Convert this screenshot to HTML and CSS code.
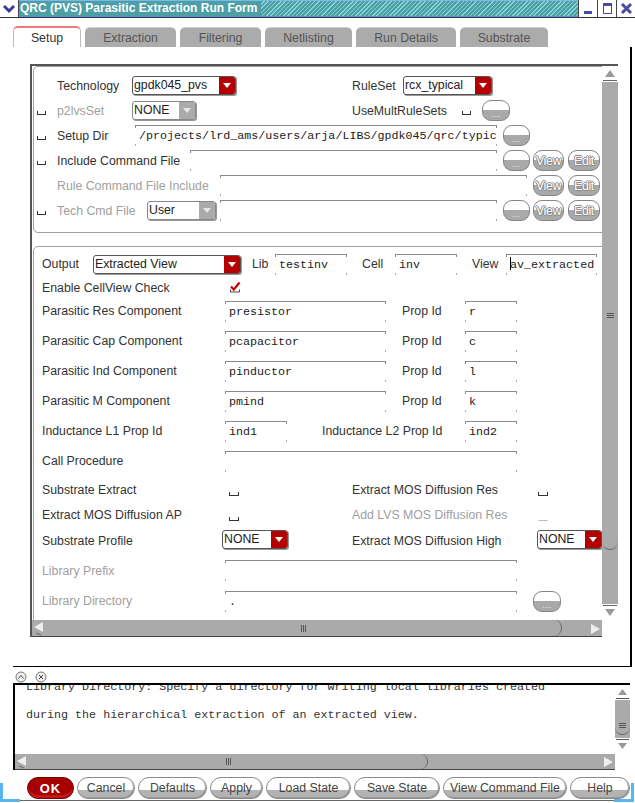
FILE: index.html
```html
<!DOCTYPE html>
<html>
<head>
<meta charset="utf-8">
<title>QRC (PVS) Parasitic Extraction Run Form</title>
<link rel="stylesheet" href="styles.css">
</head>
<body>
<div class="titlebar">
  <div class="tb-menu"><svg width="18" height="17" viewBox="0 0 18 17"><path d="M4 6 L9 11 L14 6" fill="none" stroke="#3b3b9a" stroke-width="3"/></svg></div>
  <div class="tb-title"><span class="tb-text">QRC (PVS) Parasitic Extraction Run Form</span></div>
  <div class="tb-btn"><svg width="18" height="17" viewBox="0 0 18 17"><rect x="5" y="11" width="8" height="3" fill="#4a4aa0"/></svg></div>
  <div class="tb-btn"><svg width="18" height="17" viewBox="0 0 18 17"><rect x="5.5" y="3.5" width="8" height="10" fill="none" stroke="#4a4aa0"/><rect x="5" y="3" width="9" height="3" fill="#4a4aa0"/></svg></div>
  <div class="tb-btn last"><svg width="19" height="17" viewBox="0 0 19 17"><path d="M5 4 L14 13 M14 4 L5 13" stroke="#4a4aa0" stroke-width="3"/></svg></div>
</div>

<div class="tabs">
  <div class="tab active w68">Setup</div>
  <div class="tab w91">Extraction</div>
  <div class="tab w81">Filtering</div>
  <div class="tab w87">Netlisting</div>
  <div class="tab w100">Run Details</div>
  <div class="tab w88">Substrate</div>
</div>

<div class="page">
  <div class="sframe">
    <div class="smain">
      <div class="content">
        <div class="sec sec1">
          <div class="row r25">
            <span class="cbcol"></span>
            <span class="lbl w75">Technology</span>
            <div class="dd w104"><span class="ddt">gpdk045_pvs</span><span class="dda"></span></div>
            <span class="lbl ml116 w51">RuleSet</span>
            <div class="dd w89"><span class="ddt">rcx_typical</span><span class="dda"></span></div>
          </div>
          <div class="row r25">
            <span class="cbcol"><i class="cb"></i></span>
            <span class="lbl dis w75">p2lvsSet</span>
            <div class="dd dis w64"><span class="ddt">NONE</span><span class="dda"></span></div>
            <span class="lbl ml156 w110">UseMultRuleSets</span>
            <i class="cb"></i>
            <div class="pbtn dots ml11 w28">...</div>
          </div>
          <div class="row r25">
            <span class="cbcol"><i class="cb"></i></span>
            <span class="lbl w78">Setup Dir</span>
            <div class="inp w362">/projects/lrd_ams/users/arja/LIBS/gpdk045/qrc/typic</div>
            <div class="pbtn dots ml6 w27">...</div>
          </div>
          <div class="row r25">
            <span class="cbcol"><i class="cb"></i></span>
            <span class="lbl w133">Include Command File</span>
            <div class="inp w307"></div>
            <div class="pbtn dots ml6 w27">...</div>
            <div class="pbtn ghost ml3 w31">View</div>
            <div class="pbtn ghost ml4 w32">Edit</div>
          </div>
          <div class="row r25">
            <span class="cbcol"></span>
            <span class="lbl dis w163">Rule Command File Include</span>
            <div class="inp w307"></div>
            <div class="pbtn ghost ml6 w31">View</div>
            <div class="pbtn ghost ml4 w32">Edit</div>
          </div>
          <div class="row r25">
            <span class="cbcol"><i class="cb"></i></span>
            <span class="lbl dis w90">Tech Cmd File</span>
            <div class="dd dis w69"><span class="ddt">User</span><span class="dda"></span></div>
            <div class="inp ml4 w277"></div>
            <div class="pbtn dots ml6 w27">...</div>
            <div class="pbtn ghost ml3 w31">View</div>
            <div class="pbtn ghost ml4 w32">Edit</div>
          </div>
        </div>

        <div class="sec sec2">
          <div class="row h24">
            <span class="lbl w51">Output</span>
            <div class="dd w148"><span class="ddt">Extracted View</span><span class="dda"></span></div>
            <span class="lbl ml11 w23">Lib</span>
            <div class="inp w72">testinv</div>
            <span class="lbl ml15 w33">Cell</span>
            <div class="inp w62">inv</div>
            <span class="lbl ml15 w34">View</span>
            <div class="inp w91"><span class="caret"></span>av_extracted</div>
          </div>
          <div class="row h20">
            <span class="lbl w185 nudge">Enable CellView Check</span>
            <svg class="check" width="12" height="12" viewBox="0 0 12 12"><path d="M1.5 8.5 V11 H10.5 V8.5" fill="none" stroke="#444"/><path d="M2 5.5 L4.8 8.6 L10.5 1.5" fill="none" stroke="#cc0000" stroke-width="2.2"/></svg>
          </div>
          <div class="row h30">
            <span class="lbl w183">Parasitic Res Component</span>
            <div class="inp w161">presistor</div>
            <span class="lbl ml16 w63">Prop Id</span>
            <div class="inp w52">r</div>
          </div>
          <div class="row h30">
            <span class="lbl w183">Parasitic Cap Component</span>
            <div class="inp w161">pcapacitor</div>
            <span class="lbl ml16 w63">Prop Id</span>
            <div class="inp w52">c</div>
          </div>
          <div class="row h30">
            <span class="lbl w183">Parasitic Ind Component</span>
            <div class="inp w161">pinductor</div>
            <span class="lbl ml16 w63">Prop Id</span>
            <div class="inp w52">l</div>
          </div>
          <div class="row h30">
            <span class="lbl w183">Parasitic M Component</span>
            <div class="inp w161">pmind</div>
            <span class="lbl ml16 w63">Prop Id</span>
            <div class="inp w52">k</div>
          </div>
          <div class="row h30">
            <span class="lbl w183">Inductance L1 Prop Id</span>
            <div class="inp w62">ind1</div>
            <span class="lbl ml35 w143">Inductance L2 Prop Id</span>
            <div class="inp w52">ind2</div>
          </div>
          <div class="row h30">
            <span class="lbl w183">Call Procedure</span>
            <div class="inp w292"></div>
          </div>
          <div class="row h27">
            <span class="lbl w185">Substrate Extract</span>
            <i class="cb low"></i>
            <span class="lbl ml113 w184">Extract MOS Diffusion Res</span>
            <i class="cb low"></i>
          </div>
          <div class="row h24">
            <span class="lbl w185">Extract MOS Diffusion AP</span>
            <i class="cb low"></i>
            <span class="lbl dis ml113 w184">Add LVS MOS Diffusion Res</span>
            <i class="cb low off"></i>
          </div>
          <div class="row h28">
            <span class="lbl w180">Substrate Profile</span>
            <div class="dd w66 up"><span class="ddt">NONE</span><span class="dda"></span></div>
            <span class="lbl ml64 w185">Extract MOS Diffusion High</span>
            <div class="dd w65 up"><span class="ddt">NONE</span><span class="dda"></span></div>
          </div>
          <div class="row h31">
            <span class="lbl dis w183">Library Prefix</span>
            <div class="inp w292"></div>
          </div>
          <div class="row h30">
            <span class="lbl dis w183">Library Directory</span>
            <div class="inp w292">.</div>
            <div class="pbtn dots ml16 w28">...</div>
          </div>
        </div>
      </div>
      <div class="vscroll">
        <svg width="16" height="16" viewBox="0 0 16 16"><rect width="16" height="16" fill="#fff"/><path d="M3 11 L8 4 L13 11 Z" fill="#9a9a9a"/><path d="M1 14.5 H15" stroke="#666"/></svg>
        <div class="vthumb big"><svg width="7" height="6" viewBox="0 0 7 6"><path d="M0 0.5H7M0 2.5H7M0 4.5H7" stroke="#555"/></svg></div>
        <div class="vtrack"></div>
        <svg width="16" height="16" viewBox="0 0 16 16"><rect width="16" height="16" fill="#fff"/><path d="M3 5 L8 12 L13 5 Z" fill="#9a9a9a"/><path d="M1 1.5 H15" stroke="#666"/></svg>
      </div>
    </div>
    <div class="hrow">
      <div class="hscroll w570">
        <svg width="15" height="16" viewBox="0 0 15 16"><rect width="15" height="16" fill="#aaa"/><path d="M2 7 L11 2 L11 12 Z" fill="#eee"/><path d="M4 13 L9 15" stroke="#666"/></svg>
        <div class="hthumb main"><svg width="6" height="7" viewBox="0 0 6 7"><path d="M0.5 0V7M2.5 0V7M4.5 0V7" stroke="#555"/></svg></div>
        <div class="htrack"></div>
        <svg width="15" height="16" viewBox="0 0 15 16"><rect width="15" height="16" fill="#aaa"/><path d="M13 9 L4 4 L4 14 Z" fill="#eee"/></svg>
      </div>
      <div class="corner"></div>
    </div>
  </div>
</div>

<div class="helpicons">
  <svg width="12" height="12" viewBox="0 0 12 12"><circle cx="6" cy="6" r="5" fill="#eee" stroke="#777"/><path d="M3.5 7.5 L6 4.5 L8.5 7.5" fill="none" stroke="#444"/></svg>
  <svg width="12" height="12" viewBox="0 0 12 12"><circle cx="6" cy="6" r="5" fill="#eee" stroke="#777"/><path d="M4 4 L8 8 M8 4 L4 8" stroke="#444"/></svg>
</div>

<div class="helpbox">
  <div class="hmain">
    <div class="htext">
      <div class="hline first">Library Directory: Specify a directory for writing local libraries created</div>
      <div class="hline">during the hierarchical extraction of an extracted view.</div>
    </div>
    <div class="vscroll small">
      <svg width="15" height="15" viewBox="0 0 15 15"><rect width="15" height="15" fill="#fff"/><path d="M3 10 L7.5 4 L12 10 Z" fill="#9a9a9a"/><path d="M1 13.5 H14" stroke="#555"/></svg>
      <div class="vthumb sm"><svg width="7" height="6" viewBox="0 0 7 6"><path d="M0 0.5H7M0 2.5H7M0 4.5H7" stroke="#555"/></svg></div>
      <div class="vtrack"></div>
      <svg width="15" height="16" viewBox="0 0 15 16"><rect width="15" height="16" fill="#fff"/><path d="M3 5 L7.5 11 L12 5 Z" fill="#9a9a9a"/><path d="M1 1.5 H14" stroke="#555"/></svg>
    </div>
  </div>
  <div class="hrow sm">
    <div class="hscroll w600">
      <svg width="15" height="15" viewBox="0 0 15 15"><rect width="15" height="15" fill="#aaa"/><path d="M2 7 L11 2 L11 12 Z" fill="#eee"/><path d="M4 12 L9 14" stroke="#666"/></svg>
      <div class="hthumb help"><svg width="6" height="7" viewBox="0 0 6 7"><path d="M0.5 0V7M2.5 0V7M4.5 0V7" stroke="#555"/></svg></div>
      <div class="htrack"></div>
      <svg width="15" height="15" viewBox="0 0 15 15"><rect width="15" height="15" fill="#aaa"/><path d="M13 8 L4 3 L4 13 Z" fill="#eee"/></svg>
    </div>
    <div class="corner"></div>
  </div>
</div>

<div class="buttons">
  <div class="btn ok w47">OK</div>
  <div class="btn w58">Cancel</div>
  <div class="btn w69">Defaults</div>
  <div class="btn w53">Apply</div>
  <div class="btn w85">Load State</div>
  <div class="btn w86">Save State</div>
  <div class="btn w124">View Command File</div>
  <div class="btn w60">Help</div>
</div>

<div class="grip-l"></div>
<div class="grip-r"></div>
</body>
</html>
```

FILE: styles.css
```css
* { box-sizing: border-box; margin: 0; padding: 0; }
body {
  margin: 0;
  width: 635px;
  height: 803px;
  overflow: hidden;
  background: #fff;
  font-family: "Liberation Sans", Arial, sans-serif;
  font-size: 12.3px;
  color: #333;
  position: relative;
}

/* ---------- title bar ---------- */
.titlebar { display: flex; height: 18px; border-bottom: 1px solid #333; }
.tb-menu { width: 19px; height: 17px; border-right: 1px solid #444; background: #fff; }
.tb-title {
  flex: 1;
  height: 17px;
  background: repeating-linear-gradient(135deg, #4d9fa6 0 2px, #8ad3d6 2px 3px);
  border-top: 1px solid #7cb8ee;
  border-bottom: 1px solid #5b8fe0;
}
.tb-text {
  display: inline-block;
  height: 15px;
  line-height: 15px;
  background: #4d9fa6;
  color: #fff;
  font-weight: bold;
  font-size: 12px;
  padding: 0 4px 0 1px;
}
.tb-btn { width: 19px; height: 17px; background: #fff; border-left: 1px solid #444; }
.tb-btn svg { display: block; }

/* ---------- tabs ---------- */
.tabs { display: flex; gap: 4px; margin-top: 9px; padding-left: 13px; height: 20px; }
.tab {
  height: 20px;
  background: #ababab;
  border-top: 1px solid #d0d0d0;
  border-radius: 5px 5px 0 0;
  color: #555;
  display: flex;
  align-items: center;
  justify-content: center;
}
.tab.active {
  background: #fff;
  color: #333;
  border: 1px solid #bcbcbc;
  border-top: 2px solid #f07a7a;
  border-bottom: none;
  height: 21px;
  margin-top: -1px;
}

/* ---------- page ---------- */
.page {
  margin-left: 13px;
  width: 619px;
  height: 620px;
  border-right: 2px solid #000;
  border-bottom: 1px solid #000;
  padding: 17px 0 0 17px;
}
.sframe {
  width: 588px;
  height: 573px;
  border-left: 2px solid #555;
  border-top: 2px solid #555;
  display: flex;
  flex-direction: column;
}
.smain { display: flex; height: 554px; }
.content { width: 570px; height: 554px; overflow: hidden; }

.sec { margin-left: 1px; width: 600px; border: 1px solid #a0a0a0; border-radius: 5px; }
.sec1 { height: 167px; padding-top: 6px; }
.sec2 { height: 420px; margin-top: 13px; padding: 5px 0 0 8px; }

.row { display: flex; align-items: center; white-space: nowrap; }
.r25 { height: 25px; }
.h20 { height: 20px; }
.h24 { height: 24px; }
.h27 { height: 27px; }
.h28 { height: 28px; }
.h30 { height: 30px; }
.h31 { height: 31px; }

.cbcol { width: 23px; padding-left: 3px; display: flex; flex: none; }
.lbl { flex: none; color: #333; }
.lbl.dis { color: #a0a0a0; }
.nudge { padding-top: 3px; }

.cb {
  display: inline-block;
  flex: none;
  width: 9px;
  height: 4px;
  border: 1px solid #333;
  border-top: none;
  margin-top: 4px;
}
.cb.low { width: 10px; margin-top: 8px; margin-left: 2px; }
.cb.off { border-color: #bbb; border-left-color: transparent; border-right-color: transparent; }
.check { display: block; flex: none; margin-left: 2px; margin-top: 2px; }

/* dropdown */
.dd {
  display: flex;
  flex: none;
  height: 19px;
  border: 1px solid #555;
  border-radius: 3px;
  box-shadow: 1px 1px 0 #999;
  background: #fff;
  overflow: hidden;
}
.dd.up { margin-top: -4px; }
.ddt { flex: 1; line-height: 17px; padding-left: 1px; color: #222; }
.dda {
  width: 16px;
  background: #b30000;
  display: flex;
  align-items: center;
  justify-content: center;
}
.dda::after {
  content: "";
  border-left: 4px solid transparent;
  border-right: 4px solid transparent;
  border-top: 5px solid #fff;
}
.dd.dis { border-color: #888; }
.dd.dis .dda { background: #aaa; }
.dd.dis .dda::after { border-top-color: #e6e6e6; }

/* text input */
.inp {
  position: relative;
  flex: none;
  height: 21px;
  border-top: 1px solid #8a8a8a;
  font-family: "Liberation Mono", "Courier New", monospace;
  font-size: 11.7px;
  line-height: 20px;
  padding-left: 4px;
  color: #222;
  overflow: hidden;
}
.inp::before,
.inp::after {
  content: "";
  position: absolute;
  top: 0;
  width: 1px;
  height: 2px;
  background: #8a8a8a;
  box-shadow: 0 18px 0 #aaa;
}
.inp::before { left: 0; }
.inp::after { right: 0; }
.caret {
  display: inline-block;
  width: 1px;
  height: 13px;
  background: #000;
  vertical-align: -2px;
  margin-right: -1px;
}

/* pill buttons */
.pbtn {
  flex: none;
  height: 21px;
  border: 1px solid #858585;
  border-radius: 9px;
  background: linear-gradient(#fff 0, #fff 45%, #a9a9a9 45%, #a9a9a9 100%);
  display: flex;
  align-items: center;
  justify-content: center;
}
.pbtn.dots { color: #eee; font-size: 9px; padding-top: 7px; letter-spacing: 0.5px; }
.pbtn.ghost {
  color: #fff;
  font-size: 12.3px;
  text-shadow: 1px 0 #8a8a8a, -1px 0 #8a8a8a, 0 1px #8a8a8a, 0 -1px #8a8a8a;
  letter-spacing: -0.3px;
}

/* scrollbars */
.vscroll { width: 16px; display: flex; flex-direction: column; background: #aaa; flex: none; }
.vscroll svg { display: block; flex: none; }
.vthumb {
  background: #aaa;
  border-bottom: 1px solid #666;
  border-radius: 0 0 8px 8px;
  display: flex;
  align-items: center;
  justify-content: center;
}
.vthumb svg { display: block; }
.vthumb.big { height: 468px; }
.vtrack { flex: 1; }
.vscroll.small { width: 15px; }
.vthumb.sm { height: 35px; align-items: flex-end; padding-bottom: 5px; }

.hrow { display: flex; height: 17px; }
.hscroll { display: flex; height: 17px; background: #aaa; border-bottom: 1px solid #444; }
.hscroll svg { display: block; flex: none; }
.hthumb {
  background: #aaa;
  border-right: 1px solid #666;
  border-radius: 0 8px 8px 0;
  display: flex;
  align-items: center;
  justify-content: center;
}
.hthumb.main { width: 515px; }
.hthumb.help { width: 398px; }
.htrack { flex: 1; }
.corner { width: 16px; background: #fff; }
.hrow.sm { height: 16px; }
.hrow.sm .hscroll { height: 16px; }
.hrow.sm .corner { width: 15px; }

/* help area */
.helpicons { display: flex; gap: 8px; height: 16px; padding: 4px 0 0 15px; }
.helpicons svg { display: block; }
.helpbox {
  margin-left: 13px;
  width: 617px;
  height: 87px;
  border-left: 2px solid #000;
  border-top: 2px solid #000;
}
.hmain { display: flex; height: 69px; }
.htext {
  width: 600px;
  overflow: hidden;
  padding-left: 11px;
  font-family: "Liberation Mono", "Courier New", monospace;
  font-size: 11.7px;
  line-height: 28px;
  color: #333;
  white-space: nowrap;
}
.hline.first { margin-top: -12px; }

/* bottom buttons */
.buttons { display: flex; gap: 3px; margin-top: 7px; padding-left: 27px; height: 22px; }
.btn {
  flex: none;
  height: 22px;
  border: 1px solid #8a8a8a;
  border-radius: 11px;
  background: linear-gradient(#fff 0, #fff 62%, #b3b3b3 62%, #b3b3b3 100%);
  color: #444;
  font-size: 12.3px;
  display: flex;
  align-items: center;
  justify-content: center;
  box-shadow: inset -1px -1px 0 #999;
}
.btn.ok {
  background: #a80000;
  border-color: #700;
  color: #fff;
  font-weight: bold;
  font-size: 13px;
  letter-spacing: 1px;
  box-shadow: inset 0 -3px 0 #c01818;
}

.grip-l, .grip-r { position: absolute; width: 20px; height: 19px; border-bottom: 3px solid #5ab4f0; }
.grip-l { left: 0; top: 783px; border-left: 3px solid #5ab4f0; }
.grip-r { left: 614px; top: 783px; border-right: 3px solid #5ab4f0; }
body::after { content: ""; position: absolute; left: 20px; top: 800px; width: 594px; height: 1px; background: #666; }

/* widths & margins */
.w23 { width: 23px; } .w27 { width: 27px; } .w28 { width: 28px; } .w31 { width: 31px; } .w32 { width: 32px; }
.w33 { width: 33px; } .w34 { width: 34px; } .w47 { width: 47px; } .w51 { width: 51px; } .w52 { width: 52px; }
.w53 { width: 53px; } .w58 { width: 58px; } .w60 { width: 60px; } .w62 { width: 62px; } .w63 { width: 63px; }
.w64 { width: 64px; } .w65 { width: 65px; } .w66 { width: 66px; } .w68 { width: 68px; } .w69 { width: 69px; }
.w72 { width: 72px; } .w75 { width: 75px; } .w78 { width: 78px; } .w81 { width: 81px; } .w85 { width: 85px; }
.w86 { width: 86px; } .w87 { width: 87px; } .w88 { width: 88px; } .w89 { width: 89px; } .w90 { width: 90px; }
.w91 { width: 91px; } .w100 { width: 100px; } .w104 { width: 104px; } .w110 { width: 110px; } .w124 { width: 124px; }
.w133 { width: 133px; } .w143 { width: 143px; } .w148 { width: 148px; } .w161 { width: 161px; } .w163 { width: 163px; }
.w180 { width: 180px; } .w183 { width: 183px; } .w184 { width: 184px; } .w185 { width: 185px; } .w277 { width: 277px; }
.w292 { width: 292px; } .w307 { width: 307px; } .w362 { width: 362px; } .w570 { width: 570px; } .w600 { width: 600px; }
.ml3 { margin-left: 3px; } .ml4 { margin-left: 4px; } .ml6 { margin-left: 6px; } .ml11 { margin-left: 11px; }
.ml15 { margin-left: 15px; } .ml16 { margin-left: 16px; } .ml35 { margin-left: 35px; } .ml64 { margin-left: 64px; }
.ml113 { margin-left: 113px; } .ml116 { margin-left: 116px; } .ml156 { margin-left: 156px; }
```
